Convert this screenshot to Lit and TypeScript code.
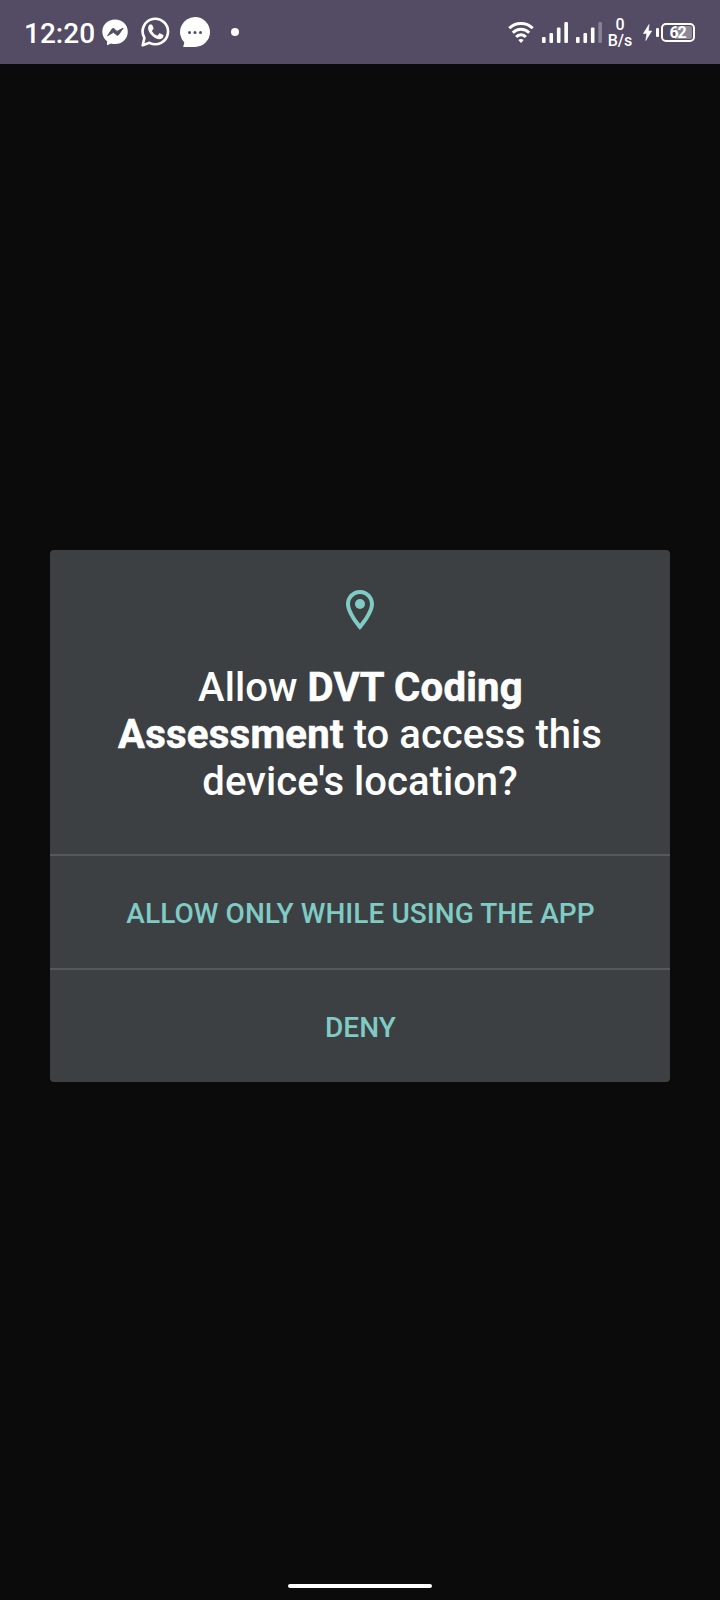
import { LitElement, html, css, svg } from "lit";
import { customElement, property } from "lit/decorators.js";

@customElement("signal-bars")
class SignalBars extends LitElement {
  @property({ type: Number }) level = 4;

  static styles = css`
    :host { display: block; }
    svg { display: block; }
    rect { fill: #fff; }
    .off { fill-opacity: 0.3; }
  `;

  render() {
    const heights = [6, 10, 15.5, 21];
    return html`<svg width="26" height="21" viewBox="0 0 26 21">
      ${heights.map((h, i) => svg`<rect class=${i < this.level ? "on" : "off"}
        x=${i * 7.45} y=${21 - h} width="3.6" height=${h} rx="1"></rect>`)}
    </svg>`;
  }
}

@customElement("status-bar")
class StatusBar extends LitElement {
  static styles = css`
    :host {
      display: flex;
      align-items: center;
      justify-content: space-between;
      box-sizing: border-box;
      height: 64px;
      padding: 0 25px 0 24px;
      background: #544b64;
      color: #fff;
    }
    svg { display: block; flex: none; }
    .side { display: flex; align-items: center; height: 64px; }
    .clock { width: 78px; font-size: 28px; font-weight: 500; line-height: 33px; padding-top: 2px; }
    .whatsapp { margin-left: 12px; }
    .chat { margin-left: 10px; }
    .more { width: 8px; height: 8px; margin-left: 20px; border-radius: 50%; background: #fff; }
    .wifi { margin-top: 1px; }
    .sim { margin: 1px 0 0 8px; }
    .rate {
      display: flex;
      flex-direction: column;
      align-items: center;
      width: 26px;
      margin-left: 5px;
      padding-top: 2px;
      font-size: 16px;
      font-weight: 500;
      line-height: 16px;
    }
    .bolt { margin: 1px 0 0 10px; }
    .cap { width: 3px; height: 9px; margin-left: 4px; border-radius: 1px; background: #fff; }
    .battery {
      box-sizing: border-box;
      width: 34px;
      height: 19px;
      margin-left: 2px;
      padding: 1px;
      border: 2px solid #fff;
      border-radius: 5px;
    }
    .level {
      height: 13px;
      border-radius: 2px;
      background: linear-gradient(90deg, transparent 38%, #8e8899 38%);
      font-size: 16px;
      font-weight: 700;
      line-height: 13.5px;
      letter-spacing: -1.2px;
      text-align: center;
      text-indent: -1px;
    }
  `;

  render() {
    return html`
      <div class="side">
        <span class="clock">12:20</span>
        <svg width="27" height="27" viewBox="0 0 27 27">
          <path fill="#fff" d="M13.1.5C20.3.5 25.8 5.600 25.800 12.700S20.300 25 13.100 25c-1.400 0-2.800-.2-4-.6L5 26.300V22.200C2 19.900.3 16.600.3 12.700.3 5.600 5.900.5 13.100.5Z"/>
          <path fill="#544b64" stroke="#544b64" stroke-width=".9" stroke-linejoin="round" d="m5.600 16.700 4.500-6.700q.8-1 1.900-.3l3 2.700 6.200-3.300-4.600 6.600q-.8 1-1.900.3L11.500 13.300Z"/>
        </svg>
        <svg class="whatsapp" width="29" height="30" viewBox="0 0 29 30">
          <path fill="none" stroke="#fff" stroke-width="2.600" stroke-linejoin="round" d="M1.700 28.200 3.400 21A12.700 12.700 0 1 1 8.500 25.800Z"/>
          <path fill="#fff" d="M9.200 7.500h1.100c.6 0 .8.1 1.100.8l1.100 2.700c.2.500 0 .9-.3 1.300l-1 1.100c-.3.400-.2.600 0 1 1.200 2 2.600 3.100 4.700 4 .4.200.7.200 1-.2l1.200-1.500c.4-.5.7-.4 1.200-.2l2.600 1.300c.5.200.7.400.6 1-.1 2.300-2 3.400-4 3.400-2.300-.1-5.400-1.600-7.500-3.800-1.900-2-3.900-4.600-3.900-7 0-1.700.9-3.900 2.100-3.900Z"/>
        </svg>
        <svg class="chat" width="31" height="30" viewBox="0 0 31 30">
          <path fill="#fff" d="M15 0A15 15 0 1 1 15 30H3.200L4.300 25.500A15 15 0 0 1 15 0Z"/>
          <g fill="#544b64"><circle cx="9.500" cy="15.400" r="1.500"/><circle cx="15" cy="15.400" r="1.500"/><circle cx="20.500" cy="15.400" r="1.500"/></g>
        </svg>
        <span class="more"></span>
      </div>
      <div class="side">
        <svg class="wifi" width="26" height="21" viewBox="0 0 26 21">
          <g fill="none" stroke="#fff" stroke-width="3">
            <path d="M1.300 6.200Q6 1.500 13 1.500T24.700 6.200"/>
            <path d="M4.800 10.700Q8.300 7.200 13 7.200T21.200 10.700"/>
            <path d="M8.200 14.900Q10 12.800 13 12.800T17.800 14.900"/>
          </g>
          <path fill="#fff" d="M10.300 18Q13 15.800 15.700 18L13 21Z"/>
        </svg>
        <signal-bars class="sim" level="4"></signal-bars>
        <signal-bars class="sim" level="3"></signal-bars>
        <div class="rate"><span>0</span><span>B/s</span></div>
        <svg class="bolt" width="9" height="17" viewBox="0 0 9 17"><path fill="#fff" stroke="#fff" stroke-width=".6" d="M6 .5.4 9.500H3.800L2.800 16.500 8.700 7H5.400Z"/></svg>
        <span class="cap"></span>
        <div class="battery"><div class="level">62</div></div>
      </div>
    `;
  }
}

@customElement("app-root")
class AppRoot extends LitElement {
  static styles = css`
    :host {
      display: flex;
      flex-direction: column;
      height: 1600px;
      background: #0b0b0b;
      font-family: Roboto, sans-serif;
    }
    .stage {
      flex: 1;
      display: flex;
      flex-direction: column;
      align-items: center;
      padding-top: 486px;
    }
    .dialog { width: 620px; border-radius: 4px; overflow: hidden; background: #3c4043; }
    .message {
      display: flex;
      flex-direction: column;
      align-items: center;
      height: 304px;
      box-sizing: border-box;
      padding-top: 36px;
    }
    .pin { display: block; }
    .title {
      width: 500px;
      margin: 30px 0 0;
      color: #fff;
      font-size: 40px;
      font-weight: 500;
      line-height: 47px;
      letter-spacing: 0.04px;
      text-align: center;
      text-indent: 1px;
    }
    .app { font-weight: 700; letter-spacing: 0.28px; -webkit-text-stroke: 0.6px #fff; }
    .action {
      display: block;
      box-sizing: content-box;
      width: 100%;
      height: 112px;
      margin: 0;
      padding: 0;
      border: 0;
      border-top: 2px solid #55595c;
      background: none;
      color: #80cbc4;
      font: 500 28px/115px Roboto, sans-serif;
      letter-spacing: 0.06px;
      text-align: center;
      text-indent: 1px;
    }
    .home { display: flex; justify-content: center; padding-bottom: 12px; }
    .handle { width: 144px; height: 4px; border-radius: 2px; background: #fff; }
  `;

  render() {
    return html`
      <status-bar></status-bar>
      <main class="stage">
        <section class="dialog">
          <div class="message">
            <svg class="pin" width="48" height="48" viewBox="0 0 24 24" fill="#80cbc4">
              <path d="M12 2C8.130 2 5 5.130 5 9c0 5.250 7 13 7 13s7-7.750 7-13c0-3.870-3.130-7-7-7zM7 9c0-2.760 2.240-5 5-5s5 2.240 5 5c0 2.880-2.880 7.190-5 9.880C9.920 16.210 7 11.850 7 9z"/>
              <circle cx="12" cy="9" r="2.500"/>
            </svg>
            <h1 class="title">Allow <span class="app">DVT Coding Assessment</span> to access this device's location?</h1>
          </div>
          <button class="action">ALLOW ONLY WHILE USING THE APP</button>
          <button class="action">DENY</button>
        </section>
      </main>
      <div class="home"><span class="handle"></span></div>
    `;
  }
}
